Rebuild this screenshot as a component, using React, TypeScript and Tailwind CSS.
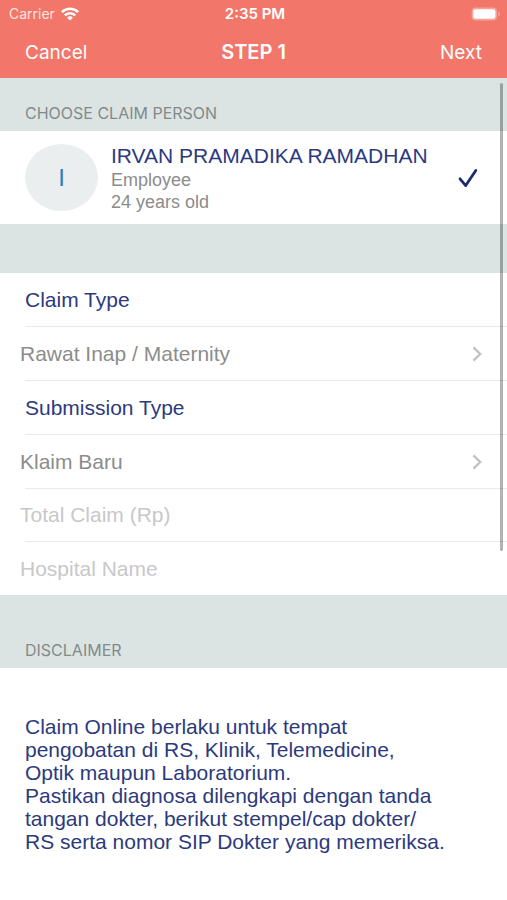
import { useState } from 'react';
import { clsx } from 'clsx';

const uiFont = "font-[Inter,'Liberation_Sans',sans-serif]";

function WifiIcon() {
  return (
    <svg viewBox="0 0 18 14" className="h-[14px] w-[18px]" fill="none" stroke="currentColor" strokeWidth="2.6" aria-hidden="true">
      <path d="M0.9 5.1a11.6 11.6 0 0 1 16.2 0" />
      <path d="M3.8 8.4a7.4 7.4 0 0 1 10.4 0" />
      <path d="M9 13.6 6.1 10.7a4.1 4.1 0 0 1 5.8 0Z" fill="currentColor" stroke="none" />
    </svg>
  );
}

function BatteryIcon() {
  return (
    <svg viewBox="0 0 30 14" className="h-[14px] w-[30px]" aria-hidden="true">
      <rect x="0.6" y="0.6" width="25.4" height="12.8" rx="4" fill="#f8a198" />
      <rect x="2.2" y="2.2" width="22.2" height="9.6" rx="2.4" fill="#fff" />
      <path d="M27.2 4.6c2.2.8 2.2 4 0 4.8Z" fill="#f8a198" />
    </svg>
  );
}

function Chevron() {
  return (
    <svg viewBox="0 0 10 16" className="h-4 w-[10px] text-[#c2c2c4]" fill="none" stroke="currentColor" strokeWidth="2.4" aria-hidden="true">
      <path d="M1.4 1.4 8.2 8l-6.8 6.6" />
    </svg>
  );
}

function SectionHeader({ title, className }: { title: string; className?: string }) {
  return (
    <h2 className={clsx(uiFont, 'flex items-end bg-[#dce4e3] px-[25px] text-[16px] leading-5 text-[#828a8b]', className)}>
      {title}
    </h2>
  );
}

// Separators start at the text inset and run to the screen edge
function Separator() {
  return <div className="ml-[25px] h-px bg-[#e9e9eb]" />;
}

function PickerRow({ label, value }: { label: string; value: string }) {
  const id = label.toLowerCase().replace(' ', '-');
  return (
    <>
      <div id={id} className="flex h-[53px] items-center px-[25px] text-[#2c3a7d]">{label}</div>
      <Separator />
      <button
        type="button"
        aria-labelledby={`${id} ${id}-value`}
        className="flex h-[53px] w-full items-center justify-between pr-[25px] pl-5 text-left text-[#8c8c8c]"
      >
        <span id={`${id}-value`}>{value}</span>
        <Chevron />
      </button>
      <Separator />
    </>
  );
}

export default function App() {
  const [selected, setSelected] = useState(true);
  const [total, setTotal] = useState('');
  const [hospital, setHospital] = useState('');

  return (
    <div className="min-h-screen bg-white font-['Liberation_Sans',Arial,sans-serif] text-[21px] leading-[23px]">
      <header className={clsx(uiFont, 'bg-[#f27669] text-white')}>
        <div className="grid h-[27px] grid-cols-3 items-center pr-[6px] pl-[9px] text-[14px] leading-5">
          <div className="flex items-center gap-[6px]">
            <span className="text-[#ffe4e0]">Carrier</span>
            <WifiIcon />
          </div>
          <span className="text-center text-[15px] font-semibold">2:35 PM</span>
          <div className="flex justify-end">
            <BatteryIcon />
          </div>
        </div>
        <nav className="grid h-[51px] grid-cols-3 items-center px-[25px] text-[19px]">
          <button type="button" className="justify-self-start">Cancel</button>
          <h1 className="text-center text-[20px] font-semibold">STEP 1</h1>
          <button type="button" className="justify-self-end">Next</button>
        </nav>
      </header>

      <main className="relative">
        <SectionHeader title="CHOOSE CLAIM PERSON" className="h-[53px] pb-2" />
        <label className="flex h-[93px] items-center pr-[29px] pl-[25px]">
          <input
            type="checkbox"
            className="peer sr-only"
            checked={selected}
            onChange={(e) => setSelected(e.target.checked)}
          />
          <span className="flex h-[67px] w-[73px] items-center justify-center rounded-[50%] bg-[#ebeeef] text-[24px] text-[#2f7cc0]">
            I
          </span>
          <span className="ml-[13px] flex flex-1 flex-col leading-[22px] text-[#8c8c8c]">
            <span className="leading-[26px] text-[#2c3a7d]">IRVAN PRAMADIKA RAMADHAN</span>
            <span className="text-[18px]">Employee</span>
            <span className="text-[18px]">24 years old</span>
          </span>
          <svg
            viewBox="0 0 20 20"
            className="invisible h-5 w-5 text-[#1c2c6b] peer-checked:visible"
            fill="none"
            stroke="currentColor"
            strokeWidth="2.8"
            strokeLinecap="round"
            strokeLinejoin="round"
            aria-hidden="true"
          >
            <path d="M2 10.8 7.7 17.6 17.8 2.4" />
          </svg>
        </label>

        <div className="h-[49px] bg-[#dce4e3]" />

        <PickerRow label="Claim Type" value="Rawat Inap / Maternity" />
        <PickerRow label="Submission Type" value="Klaim Baru" />
        <input
          aria-label="Total Claim (Rp)"
          placeholder="Total Claim (Rp)"
          inputMode="numeric"
          value={total}
          onChange={(e) => setTotal(e.target.value)}
          className="block h-[52px] w-full px-5 text-[#2c3a7d] outline-none placeholder:text-[#c8c8c8]"
        />
        <Separator />
        <input
          aria-label="Hospital Name"
          placeholder="Hospital Name"
          value={hospital}
          onChange={(e) => setHospital(e.target.value)}
          className="block h-[53px] w-full px-5 text-[#2c3a7d] outline-none placeholder:text-[#c8c8c8]"
        />

        <SectionHeader title="DISCLAIMER" className="h-[73px] pb-2" />
        <div className="pt-[47px] pr-[60px] pb-12 pl-[25px] text-[#2c3a7d]">
          <p>Claim Online berlaku untuk tempat pengobatan di RS, Klinik, Telemedicine, Optik maupun Laboratorium.</p>
          <p>Pastikan diagnosa dilengkapi dengan tanda tangan dokter, berikut stempel/cap dokter/<br />RS serta nomor SIP Dokter yang memeriksa.</p>
        </div>

        {/* Scroll indicator */}
        <div className="absolute top-[5px] right-1 h-[468px] w-[3px] rounded-full bg-black/30" />
      </main>
    </div>
  );
}
